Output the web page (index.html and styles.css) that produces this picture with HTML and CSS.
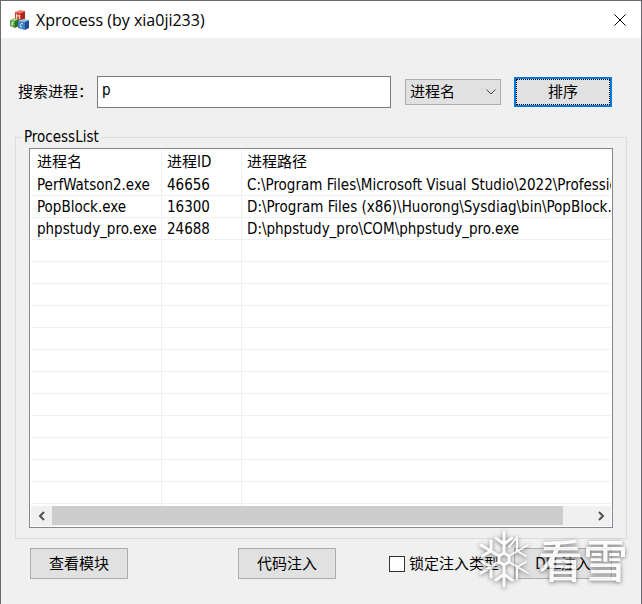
FILE: index.html
```html
<!DOCTYPE html>
<html lang="zh-CN">
<head>
<meta charset="utf-8">
<meta name="viewport" content="width=device-width, initial-scale=1">
<title>Xprocess (by xia0ji233)</title>
<link rel="stylesheet" href="styles.css">
</head>
<body>
<main class="window">
  <header class="titlebar">
    <svg class="app-icon" viewBox="0 0 20 20" aria-hidden="true">
      <path fill="#ef7b66" d="M5 2l5-2 5 1-4 2z"/>
      <path fill="#d8432e" d="M5 2l6 1v8l-6-1z"/>
      <path fill="#ad2718" d="M11 3l4-2v8l-4 2z"/>
      <path fill="#9bcf83" d="M0 10l4-2 5 1-4 2z"/>
      <path fill="#4f9a3b" d="M0 10l5 1v7l-5-2z"/>
      <path fill="#2d6e24" d="M5 11l4-2v7l-4 2z"/>
      <path fill="#8fc0ea" d="M8 11l5-2 6 1-4 2z"/>
      <path fill="#3c7fc4" d="M8 11l7 1v8l-7-2z"/>
      <path fill="#1e4f91" d="M15 12l4-2v8l-4 2z"/>
      <path fill="none" stroke="#fff" stroke-opacity=".8" d="M6.500 8.500v-4l1.500 2 1.500-1.500v4M2 16v-4l2 .5M2 14l1.500.3M13 14l-2-.5-.7 1v2l2 .7"/>
    </svg>
    <h1 class="title">Xprocess (by xia0ji233)</h1>
    <button class="close" type="button" aria-label="关闭">
      <svg viewBox="0 0 12 12" aria-hidden="true"><path d="M.5.5l11 11M11.500.5l-11 11"/></svg>
    </button>
  </header>

  <form class="search">
    <label class="search-label" for="query">搜索进程：</label>
    <input class="query" id="query" type="text" value="p">
    <span class="picker">
      <select class="field" aria-label="搜索字段"><option>进程名</option></select>
      <svg class="chevron" viewBox="0 0 10 6" aria-hidden="true"><path d="M.5.5L5 5 9.500.5"/></svg>
    </span>
    <button class="button button-default" type="button">排序</button>
  </form>

  <fieldset class="group">
    <legend class="legend">ProcessList</legend>
    <div class="list">
      <div class="viewport">
        <table class="processes">
          <thead>
            <tr><th class="col-name">进程名</th><th class="col-id">进程ID</th><th>进程路径</th></tr>
          </thead>
          <tbody>
            <tr><td>PerfWatson2.exe</td><td>46656</td><td>C:\Program Files\Microsoft Visual Studio\2022\Profession</td></tr>
            <tr><td>PopBlock.exe</td><td>16300</td><td>D:\Program Files (x86)\Huorong\Sysdiag\bin\PopBlock.exe</td></tr>
            <tr><td>phpstudy_pro.exe</td><td>24688</td><td>D:\phpstudy_pro\COM\phpstudy_pro.exe</td></tr>
          </tbody>
        </table>
      </div>
      <div class="scrollbar">
        <button class="arrow" type="button" aria-label="向左滚动"><svg viewBox="0 0 8 10" aria-hidden="true"><path d="M6 1L2 5l4 4"/></svg></button>
        <div class="track"><div class="thumb"></div></div>
        <button class="arrow" type="button" aria-label="向右滚动"><svg viewBox="0 0 8 10" aria-hidden="true"><path d="M2 1l4 4-4 4"/></svg></button>
      </div>
    </div>
  </fieldset>

  <footer class="actions">
    <button class="button" type="button">查看模块</button>
    <button class="button" type="button">代码注入</button>
    <label class="lock"><input class="tick" type="checkbox">锁定注入类型</label>
    <button class="button" type="button">DLL注入</button>
  </footer>

  <div class="watermark">
    <svg class="flake" viewBox="0 0 52 60" aria-hidden="true">
      <path d="M26 24l5 3v6l-5 3-5-3v-6z"/>
      <path d="M26 24V3M26 36v21M21 27L3 16M21 33L3 44"/>
      <path d="M18 9l8 6 8-6M18 51l8-6 8 6M4 27l9-5V12M4 33l9 5v10"/>
      <path class="thin" d="M31 33l19 11M31 27l19-11M48 27l-9-5V10M48 33l-9 5v12M31 18l8-10"/>
    </svg>
    <span class="brand">看雪</span>
  </div>
</main>
</body>
</html>
```

FILE: styles.css
```css
* {
  box-sizing: border-box;
}

body {
  margin: 0;
  color: #000;
  font: 15px/22px "DejaVu Sans Condensed", "Noto Sans CJK SC", sans-serif;
}

button,
input,
select {
  margin: 0;
  color: inherit;
  font: inherit;
}

.window {
  position: relative;
  display: flex;
  flex-direction: column;
  min-height: 100vh;
  border: 1px solid #6b6a6c;
  background: #f0f0f0;
}

.titlebar {
  display: flex;
  align-items: center;
  gap: 6px;
  height: 37px;
  padding: 0 15px 0 9px;
  background: #fff;
}

.app-icon {
  width: 20px;
  height: 20px;
}

.title {
  flex: 1;
  margin: 0;
  font: 16px/22px "Open Sans", sans-serif;
}

.close {
  display: flex;
  padding: 0;
  border: 0;
  background: none;
}

.close svg {
  width: 12px;
  height: 12px;
  fill: none;
  stroke: #000;
}

.search {
  display: flex;
  align-items: center;
  padding: 38px 29px 0 17px;
}

.search-label {
  width: 79px;
  white-space: nowrap;
}

.query {
  flex: 1;
  min-width: 0;
  height: 32px;
  padding: 0 4px 4px;
  border: 1px solid #7a7a7a;
  background: #fff;
  outline: 0;
}

.picker {
  position: relative;
  width: 96px;
  margin: 0 13px 0 14px;
}

.field {
  display: block;
  width: 100%;
  height: 26px;
  padding: 0 4px;
  appearance: none;
  border: 1px solid #adadad;
  border-radius: 0;
  background: #e1e1e1;
}

.chevron {
  position: absolute;
  top: 10px;
  right: 5px;
  width: 10px;
  height: 6px;
  fill: none;
  stroke: #444;
  pointer-events: none;
}

.button {
  width: 98px;
  height: 30px;
  padding: 0;
  border: 1px solid #adadad;
  background: #e1e1e1;
}

.button-default {
  border: 2px solid #0078d7;
  outline: 1px dotted #000;
  outline-offset: -3px;
}

.group {
  display: flex;
  flex: 1;
  min-width: 0;
  margin: 19px 14px 0;
  padding: 0 13px 10px;
  border: 1px solid #dcdcdc;
}

.legend {
  margin-left: -7px;
  padding: 0 2px;
  line-height: 21px;
}

.list {
  display: flex;
  flex: 1;
  flex-direction: column;
  min-width: 0;
  min-height: 380px;
  padding: 1px;
  border: 1px solid #828790;
  background: #fff;
}

.viewport {
  flex: 1;
  overflow: hidden;
  background:
    linear-gradient(#f0f0f0, #f0f0f0) 130px 0 / 1px 100% no-repeat,
    linear-gradient(#f0f0f0, #f0f0f0) 210px 0 / 1px 100% no-repeat,
    repeating-linear-gradient(#fff 0 21px, #f0f0f0 21px 22px) 0 24px no-repeat;
}

.processes {
  width: 100%;
  table-layout: fixed;
  border-collapse: collapse;
}

.processes th,
.processes td {
  height: 22px;
  padding: 0 0 0 6px;
  overflow: hidden;
  font-weight: normal;
  line-height: 22px;
  text-align: left;
  text-overflow: clip;
  white-space: nowrap;
}

.processes th {
  height: 24px;
}

.col-name {
  width: 130px;
}

.col-id {
  width: 80px;
}

.scrollbar {
  display: flex;
  height: 20px;
  background: #f0f0f0;
}

.arrow {
  display: flex;
  align-items: center;
  justify-content: center;
  width: 21px;
  padding: 0;
  border: 0;
  background: none;
}

.arrow svg {
  width: 8px;
  height: 10px;
  fill: none;
  stroke: #505050;
  stroke-width: 2;
}

.track {
  flex: 1;
}

.thumb {
  width: 95%;
  height: 19px;
  background: #cdcdcd;
}

.actions {
  display: grid;
  grid-template-columns: 208fr 151fr 125fr 98px;
  align-items: center;
  padding: 9px 29px 25px;
}

.actions .button {
  height: 31px;
}

.lock {
  display: flex;
  align-items: center;
  gap: 4px;
  white-space: nowrap;
}

.tick {
  width: 16px;
  height: 16px;
  appearance: none;
  border: 1px solid #333;
  background: #fff;
}

.watermark {
  position: absolute;
  right: 13px;
  bottom: 15px;
  display: flex;
  align-items: center;
  gap: 8px;
  color: #fff;
  opacity: 0.8;
  filter: drop-shadow(0 1px 2px #555);
  pointer-events: none;
}

.flake {
  width: 52px;
  height: 60px;
  fill: none;
  stroke: #fff;
  stroke-width: 3;
  stroke-linecap: round;
}

.thin {
  stroke-width: 2;
}

.brand {
  font: 500 45px/56px "Noto Sans CJK SC", sans-serif;
}
```
